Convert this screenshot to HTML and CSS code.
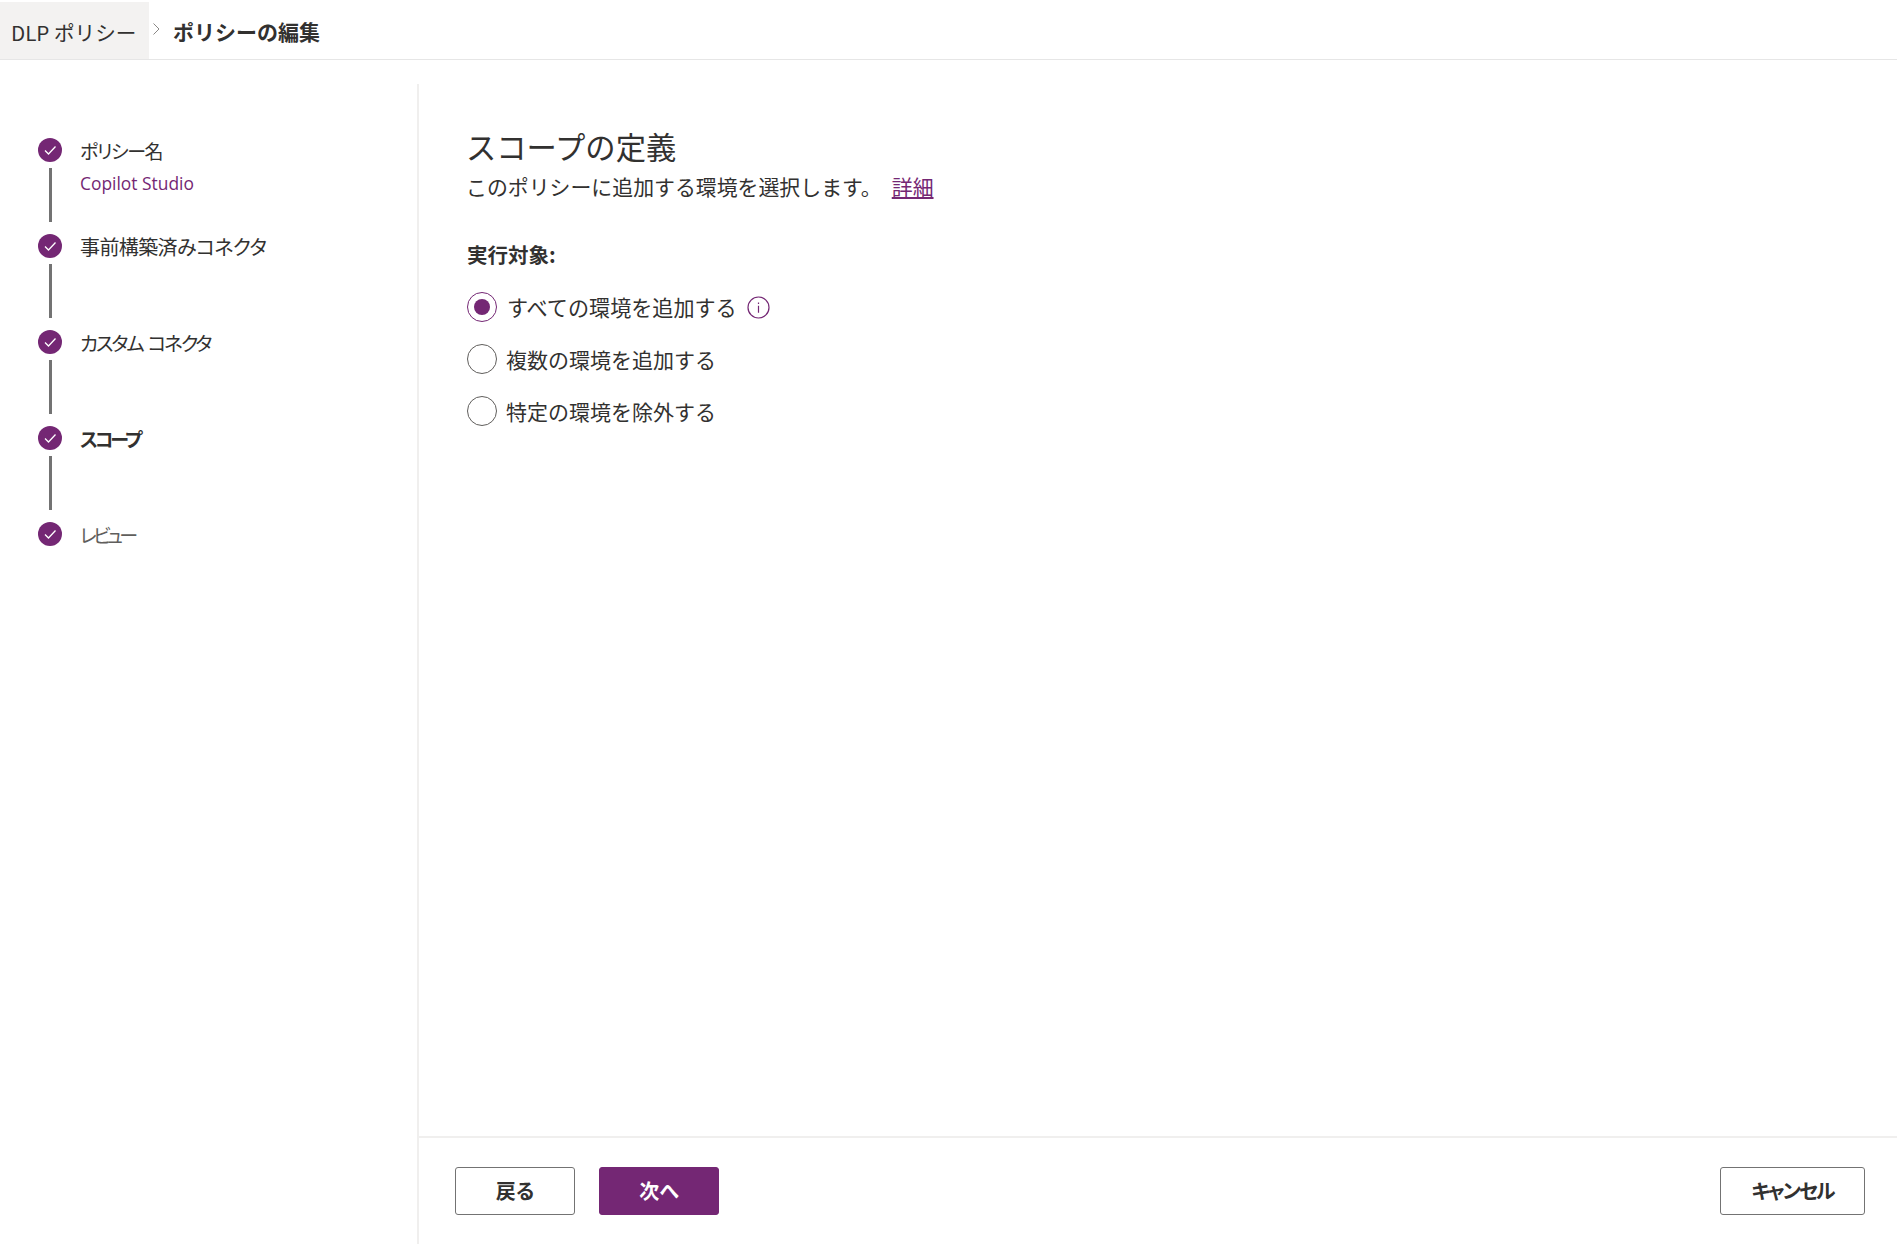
FILE: index.html
```html
<!DOCTYPE html>
<html lang="ja">
<head>
<meta charset="utf-8">
<title>ポリシーの編集</title>
<link rel="stylesheet" href="styles.css">
</head>
<body>
<header class="topbar">
  <a class="crumb">DLP ポリシー</a>
  <svg class="chev" width="9" height="14" viewBox="0 0 9 14"><path d="M1.500 1.500 7 7l-5.500 5.500" fill="none" stroke="#8a8886" stroke-width="1"/></svg>
  <span class="crumb-current">ポリシーの編集</span>
</header>
<div class="layout">
  <nav class="steps">
    <div class="step"><span class="dot"><svg width="14" height="12" viewBox="0 0 14 12"><path d="M2 6.500 5.500 10 12.500 2.500" fill="none" stroke="#fff" stroke-width="1.300"/></svg></span><div class="step-text"><div class="step-label k-name">ポリシー名</div><div class="step-sub">Copilot Studio</div></div></div>
    <div class="step"><span class="dot"><svg width="14" height="12" viewBox="0 0 14 12"><path d="M2 6.500 5.500 10 12.500 2.500" fill="none" stroke="#fff" stroke-width="1.300"/></svg></span><div class="step-text"><div class="step-label k-prebuilt">事前構築済みコネクタ</div></div></div>
    <div class="step"><span class="dot"><svg width="14" height="12" viewBox="0 0 14 12"><path d="M2 6.500 5.500 10 12.500 2.500" fill="none" stroke="#fff" stroke-width="1.300"/></svg></span><div class="step-text"><div class="step-label k-custom">カスタム コネクタ</div></div></div>
    <div class="step"><span class="dot"><svg width="14" height="12" viewBox="0 0 14 12"><path d="M2 6.500 5.500 10 12.500 2.500" fill="none" stroke="#fff" stroke-width="1.300"/></svg></span><div class="step-text"><div class="step-label current">スコープ</div></div></div>
    <div class="step last"><span class="dot"><svg width="14" height="12" viewBox="0 0 14 12"><path d="M2 6.500 5.500 10 12.500 2.500" fill="none" stroke="#fff" stroke-width="1.300"/></svg></span><div class="step-text"><div class="step-label muted">レビュー</div></div></div>
  </nav>
  <main class="main">
    <section class="content">
      <h1 class="title">スコープの定義</h1>
      <p class="desc">このポリシーに追加する環境を選択します。<a class="link">詳細</a></p>
      <div class="group-label">実行対象:</div>
      <div class="radio-row first"><span class="radio on"></span><span class="radio-label wide">すべての環境を追加する</span>
        <svg class="info" width="23" height="23" viewBox="0 0 23 23"><circle cx="11.500" cy="11.500" r="10.500" fill="none" stroke="#742774" stroke-width="1.200"/><path d="M11.500 6.500v1.400M11.500 9.800v7" stroke="#742774" stroke-width="1.200"/></svg>
      </div>
      <div class="radio-row second"><span class="radio"></span><span class="radio-label">複数の環境を追加する</span></div>
      <div class="radio-row"><span class="radio"></span><span class="radio-label">特定の環境を除外する</span></div>
    </section>
    <footer class="footer">
      <button class="btn">戻る</button>
      <button class="btn primary">次へ</button>
      <button class="btn cancel">キャンセル</button>
    </footer>
  </main>
</div>
</body>
</html>
```
FILE: styles.css
```css
* { box-sizing: border-box; }
html, body { margin: 0; height: 100%; }
body {
  font-family: "Noto Sans CJK JP", "Open Sans", sans-serif;
  color: #323130;
  background: #fff;
  overflow: hidden;
}
.topbar {
  display: flex;
  align-items: center;
  height: 60px;
  border-bottom: 1px solid #e6e6e6;
  padding-top: 2px;
}
.crumb {
  display: flex;
  align-items: center;
  height: 57px;
  width: 149px;
  padding: 2px 0 0 11px;
  background: #f3f2f1;
  font-size: 20.600px;
  white-space: nowrap;
}
.chev { margin: -4px 0 0 3px; }
.crumb-current { margin-left: 12px; font-size: 21px; font-weight: 700; padding-top: 1px; }
.layout { display: flex; height: 1184px; padding-top: 24px; }
.steps {
  width: 419px;
  border-right: 2px solid #f0efee;
  padding: 54px 0 0 38px;
}
.step { display: flex; height: 96px; position: relative; }
.step:not(.last)::after {
  content: "";
  position: absolute;
  left: 11px;
  top: 30px;
  width: 3px;
  height: 54px;
  background: #737373;
}
.dot {
  flex: none;
  display: flex;
  align-items: center;
  justify-content: center;
  width: 24px;
  height: 24px;
  border-radius: 50%;
  background: #742774;
}
.step-text { margin-left: 18px; }
.step-label { font-size: 20px; line-height: 26px; white-space: nowrap; font-feature-settings: "palt"; }
.k-name { font-size: 19px; letter-spacing: -1.400px; }
.k-prebuilt { letter-spacing: -0.600px; }
.k-custom { font-size: 19.500px; letter-spacing: -2.100px; word-spacing: 3px; }
.step-label.current { font-size: 19px; font-weight: 700; letter-spacing: -3px; }
.step-label.muted { font-size: 19px; color: #605e5c; letter-spacing: -3.600px; }
.step-sub { margin-top: 7px; font-family: "Open Sans", sans-serif; font-size: 17.400px; line-height: 24px; color: #742774; }
.main { flex: 1; display: flex; flex-direction: column; }
.content { flex: 1; padding: 42px 0 0 48px; }
.title { margin: 0 0 0 -1px; font-size: 30.300px; line-height: 40px; font-weight: 400; }
.desc { margin: 4px 0 0 -1px; font-size: 20.900px; line-height: 32px; white-space: nowrap; }
.link { margin-left: 10px; color: #742774; text-decoration: underline; }
.group-label { margin-top: 36px; font-size: 20.500px; line-height: 32px; font-weight: 700; font-feature-settings: "palt"; }
.radio-row { display: flex; align-items: center; height: 51px; }
.radio-row.first { margin-top: 11px; height: 52px; }
.radio-row.second { height: 52px; }
.radio {
  flex: none;
  width: 30px;
  height: 30px;
  border: 1.500px solid #605e5c;
  border-radius: 50%;
  position: relative;
}
.radio.on { border-color: #742774; }
.radio.on::after {
  content: "";
  position: absolute;
  inset: 6px;
  border-radius: 50%;
  background: #742774;
}
.radio-label { margin-left: 9px; font-size: 21px; white-space: nowrap; }
.radio-label.wide { margin-left: 10px; font-size: 21.100px; }
.info { margin-left: 10px; }
.footer {
  display: flex;
  align-items: center;
  height: 108px;
  flex: none;
  border-top: 2px solid #f0efee;
  padding: 0 32px 0 36px;
}
.btn {
  width: 120px;
  height: 48px;
  font: 700 20px "Noto Sans CJK JP", sans-serif;
  font-feature-settings: "palt";
  color: #323130;
  background: #fff;
  border: 1px solid #737373;
  border-radius: 3px;
  padding: 0 0 2px;
}
.btn.primary { margin-left: 24px; background: #742774; border-color: #742774; color: #fff; }
.btn.cancel { margin-left: auto; width: 145px; letter-spacing: -2px; }
```
